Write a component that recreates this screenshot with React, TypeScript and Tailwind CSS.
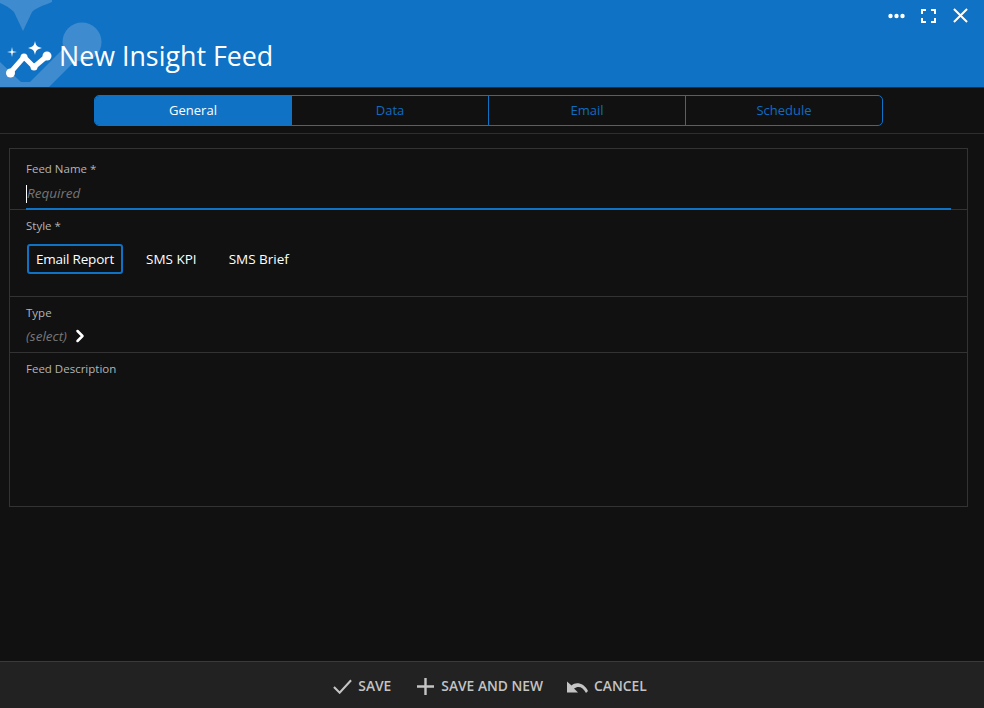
import { ChevronRight } from "lucide-react"

const tabs = ["General", "Data", "Email", "Schedule"]

function InsightIcon({ className }: { className?: string }) {
  return (
    <svg viewBox="0 0 46 38" className={className} fill="none">
      <path d="M4 33 L18 17 L28 27 L41 16" stroke="#fff" strokeWidth="5" strokeLinecap="round" strokeLinejoin="round" />
      <circle cx="4.5" cy="33" r="4.5" fill="#fff" />
      <circle cx="18" cy="17" r="3.5" fill="#fff" />
      <circle cx="28" cy="27" r="3.5" fill="#fff" />
      <circle cx="41" cy="16" r="4.5" fill="#fff" />
      <path d="M29 1 C29.8 5.5 31 7 36 8 C31 9 29.8 10.5 29 15 C28.2 10.5 27 9 22 8 C27 7 28.2 5.5 29 1 Z" fill="#fff" />
      <path d="M6 7 L6.8 11.2 L11 12 L6.8 12.8 L6 17 L5.2 12.8 L1 12 L5.2 11.2 Z" fill="#fff" />
    </svg>
  )
}

function HeaderWatermark() {
  return (
    <svg viewBox="0 0 104 87" className="absolute left-0 top-0 h-[87px] w-[104px]" fill="#3f8bcf">
      <path d="M0 0 L52 0 L52 2 C42 6 36 8 32 12 L23 31 L14 12 C10 8 5 5 0 3 Z" />
      <path d="M0 62 L21 82 L30 82 L66 46 L88 48 L49 87 L0 87 Z" />
      <circle cx="82" cy="42" r="19.5" />
    </svg>
  )
}

function WindowIcons() {
  return (
    <div className="absolute right-[16px] top-[8px] flex items-center">
      <svg viewBox="0 0 17 6" className="h-[6px] w-[17px]" fill="#fff">
        <circle cx="2.5" cy="3" r="2.2" />
        <circle cx="8.5" cy="3" r="2.2" />
        <circle cx="14.5" cy="3" r="2.2" />
      </svg>
      <svg viewBox="0 0 15 14" className="ml-[16px] h-[14px] w-[15px]" fill="none" stroke="#fff" strokeWidth="2">
        <path d="M1 5V1H5M10 1H14V5M14 9V13H10M5 13H1V9" />
      </svg>
      <svg viewBox="0 0 16 16" className="ml-[17px] h-[15px] w-[15px]" fill="none" stroke="#fff" strokeWidth="2.1">
        <path d="M1 1L15 15M15 1L1 15" />
      </svg>
    </div>
  )
}

export default function App() {
  return (
    <div className="flex h-[708px] w-[984px] flex-col overflow-hidden bg-[#111111] font-['Open_Sans','Noto_Sans',sans-serif]">
      <header className="relative flex h-[88px] shrink-0 items-center border-b border-[#2c2c2c] bg-[#0f72c5] pl-[6px] pt-[25px]">
        <HeaderWatermark />
        <WindowIcons />
        <InsightIcon className="relative top-[3px] h-[38px] w-[46px]" />
        <h1 className="relative ml-[7px] text-[26.8px] leading-[36px] text-white">New Insight Feed</h1>
      </header>

      <div className="flex h-[46px] shrink-0 justify-center border-b border-[#2e2e2e] pr-[7px] pt-[7px]">
        <div className="flex h-[31px] w-[789px] overflow-hidden rounded-[5px] border border-[#0f72c5]">
          {tabs.map((tab, i) => (
            <div
              key={tab}
              className={
                i === 0
                  ? "flex flex-1 items-center justify-center bg-[#0f72c5] pt-px text-[13px] text-white"
                  : "flex flex-1 items-center justify-center border-l border-[#0f72c5] pt-px text-[13px] text-[#0f6cc0]"
              }
            >
              {tab}
            </div>
          ))}
        </div>
      </div>

      <main className="min-h-0 flex-1 px-[9px] pt-[14px]">
        <div className="h-[359px] w-[959px] border border-[#333333]">
          <section className="relative h-[60px] pl-[16px] pr-[16px] pt-[12px]">
            <div className="text-[11.5px] leading-[16px] text-[#b4b4b4]">Feed Name *</div>
            <div className="mt-[8px] flex h-[17px] items-center">
              <span className="h-[18px] w-px bg-white" />
              <span className="text-[13.5px] italic text-[#757575]">Required</span>
            </div>
            <div className="absolute bottom-[-1px] left-[16px] right-[16px] h-[2px] bg-[#0f72c5]" />
          </section>

          <section className="h-[87px] border-t border-[#333333] pl-[16px] pt-[8px]">
            <div className="text-[11.5px] leading-[16px] text-[#b4b4b4]">Style *</div>
            <div className="mt-[10px] flex items-center text-[13.5px] text-white">
              <button className="ml-px h-[30px] w-[96px] rounded-[3px] border-2 border-[#0f72c5] tracking-[-0.2px]">
                Email Report
              </button>
              <button className="ml-[23px]">SMS KPI</button>
              <button className="ml-[32px]">SMS Brief</button>
            </div>
          </section>

          <section className="h-[56px] border-t border-[#333333] pl-[16px] pt-[8px]">
            <div className="text-[11.5px] leading-[16px] text-[#b4b4b4]">Type</div>
            <div className="mt-[6px] flex h-[18px] items-center">
              <span className="text-[13.5px] italic text-[#777777]">(select)</span>
              <ChevronRight className="ml-[3px] h-[20px] w-[20px] text-white" strokeWidth={3} />
            </div>
          </section>

          <section className="border-t border-[#333333] pl-[16px] pt-[8px]">
            <div className="text-[11.5px] leading-[16px] text-[#b4b4b4]">Feed Description</div>
          </section>
        </div>
      </main>

      <footer className="flex h-[47px] shrink-0 items-center justify-center border-t border-[#3a3a3a] bg-[#222222] pr-[4px] pt-[3px] text-[13.8px] font-semibold text-[#c4c4c4]">
        <svg viewBox="0 0 20 15" className="h-[15px] w-[19px]" fill="none" stroke="#c4c4c4" strokeWidth="2.2">
          <path d="M1 8L7 14L19 1" />
        </svg>
        <span className="ml-[6px]">SAVE</span>
        <svg viewBox="0 0 17 17" className="ml-[26px] h-[17px] w-[17px]" fill="none" stroke="#c4c4c4" strokeWidth="2.4">
          <path d="M0 8.5H17M8.5 0V17" />
        </svg>
        <span className="ml-[7px]">SAVE AND NEW</span>
        <svg viewBox="0 0 21 12" className="ml-[24px] h-[12px] w-[21px]" fill="#c4c4c4">
          <path d="M0 0.5 L0 11.5 L11 11.5 L7 7.5 C11 4.5 16 5.5 19 12 L21 10 C17 2 9 0.5 4.5 4.5 Z" />
        </svg>
        <span className="ml-[6px]">CANCEL</span>
      </footer>
    </div>
  )
}
